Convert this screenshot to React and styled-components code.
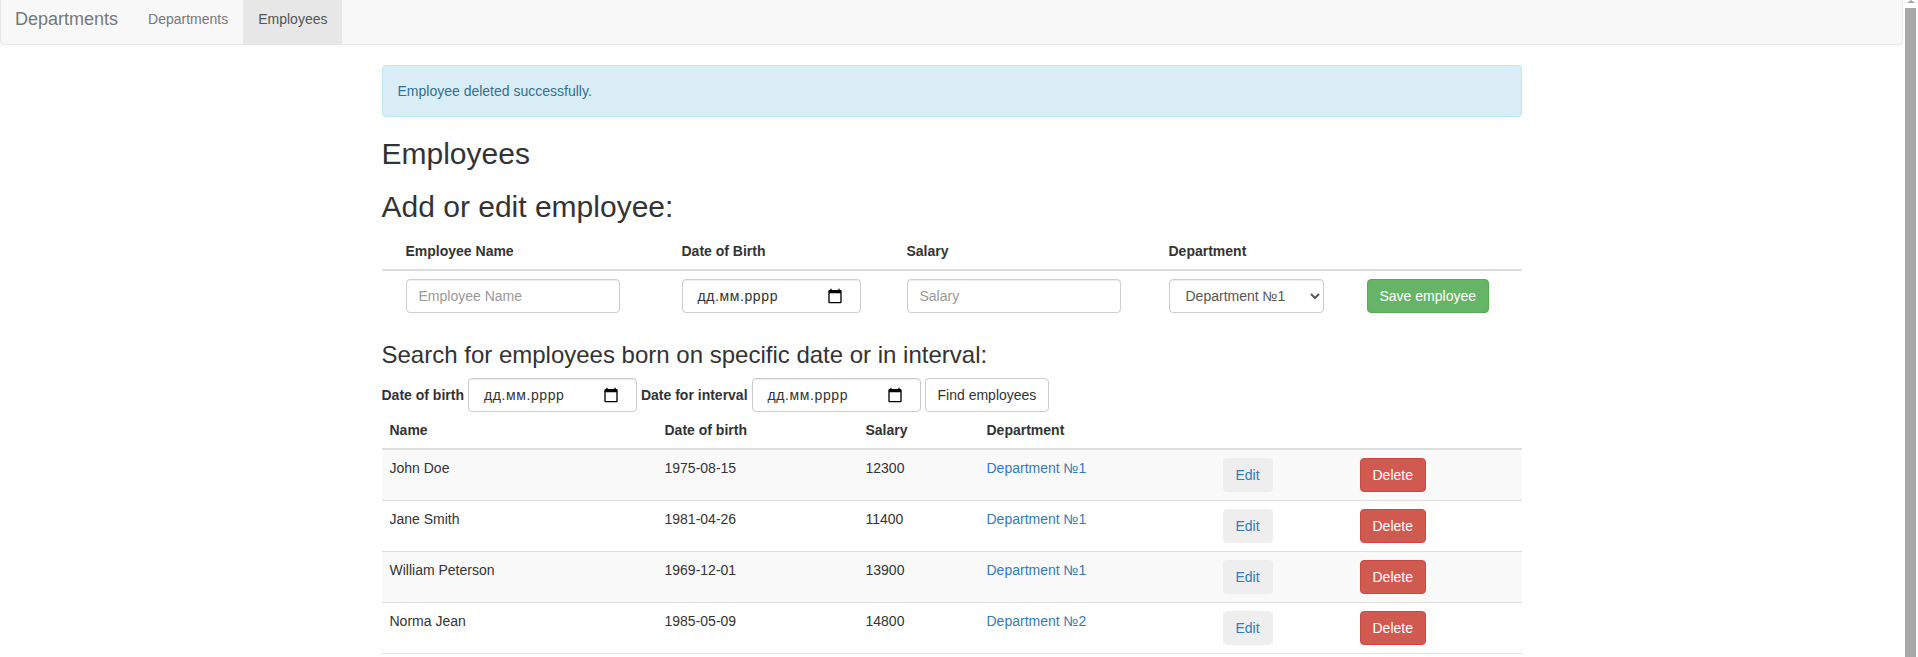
import React from 'react';
import styled, { createGlobalStyle, css } from 'styled-components';

const GlobalStyle = createGlobalStyle`
  * { box-sizing: border-box; }
  body {
    margin: 0 15px 0 0;
    font-family: "Liberation Sans", Arial, Helvetica, sans-serif;
    font-size: 14px;
    line-height: 1.42857143;
    color: #333;
    background: #fff;
  }
`;

/* drawing of the window's vertical scrollbar, which lies over the page edge */
const ScrollTrack = styled.div`
  position: fixed;
  top: 0;
  right: 0;
  width: 15px;
  height: 100vh;
  display: flex;
  flex-direction: column;
  align-items: center;
  background: #fff;
`;

const ScrollArrow = styled.div`
  width: 0;
  height: 0;
  border-left: 4px solid transparent;
  border-right: 4px solid transparent;
  border-bottom: 3px solid #a3a3a3;
  margin-bottom: 5px;
`;

const ScrollThumb = styled.div`
  flex: 1;
  width: 11px;
  background: #a8a8a8;
`;

const Navbar = styled.nav`
  display: flex;
  height: 45px;
  background: #f8f8f8;
  border: 1px solid #e7e7e7;
  border-top: 0;
  border-radius: 0 0 4px 4px;
  margin-bottom: 20px;
`;

const Brand = styled.a`
  padding: 9px 15px 15px 14px;
  font-size: 18px;
  line-height: 20px;
  color: #777;
  text-decoration: none;
`;

const NavList = styled.ul`
  display: flex;
  margin: 0;
  padding: 0;
  list-style: none;
`;

const NavLink = styled.a`
  display: block;
  padding: 9px 15px 15px;
  line-height: 20px;
  color: ${(p) => (p.$active ? '#555' : '#777')};
  background: ${(p) => (p.$active ? '#e7e7e7' : 'transparent')};
  text-decoration: none;
`;

const Container = styled.main`
  width: 1170px;
  margin: 0 auto;
  padding: 0 15px;
`;

const Alert = styled.div`
  padding: 15px;
  margin-bottom: 20px;
  border: 1px solid #bce8f1;
  border-radius: 4px;
  background: #d9edf7;
  color: #31708f;
`;

const H2 = styled.h2`
  margin: 20px 0 10px;
  font-size: 30px;
  font-weight: 500;
  line-height: 1.1;
`;

const H3 = styled.h3`
  margin: 20px 0 10px;
  font-size: 24px;
  font-weight: 500;
  line-height: 1.1;
`;

const FormTable = styled.div`
  margin-bottom: 21px;
`;

const FormRow = styled.div`
  display: grid;
  grid-template-columns: 276px 225px 262px 198px 1fr;
  padding-left: 16px;
  ${(p) =>
    p.$head &&
    css`
      border-bottom: 2px solid #ddd;
      font-weight: bold;
    `}
`;

const FormCell = styled.div`
  padding: 8px;
  line-height: 20px;
`;

const controlBase = css`
  height: 34px;
  padding: 6px 12px;
  font-family: inherit;
  font-size: 14px;
  line-height: 1.42857143;
  color: #555;
  background: #fff;
  border: 1px solid #ccc;
  border-radius: 4px;
  box-shadow: inset 0 1px 1px rgba(0, 0, 0, 0.075);
`;

const TextInput = styled.input`
  ${controlBase}
  display: block;
  width: ${(p) => p.$w}px;
  &::placeholder { color: #999; }
`;

const DateBox = styled.label`
  ${controlBase}
  display: inline-flex;
  align-items: center;
  justify-content: space-between;
  width: ${(p) => p.$w}px;
  padding: 6px 17px 6px 15px;
  color: #333;
  flex: none;
`;

const DateText = styled.span`
  letter-spacing: 0.6px;
`;

const Select = styled.select`
  ${controlBase}
  display: block;
  width: ${(p) => p.$w}px;
  color: #555;
`;

const variants = {
  success: css`background: #66b466; border-color: #58ac58; color: #fff;`,
  default: css`background: #fff; border-color: #ccc; color: #333;`,
  danger: css`background: #d05a50; border-color: #c94a42; color: #fff;`,
  light: css`background: #eee; border-color: #eee; color: #337ab7;`,
};

const Button = styled.button`
  display: inline-block;
  height: 34px;
  padding: 6px 12px;
  font-family: inherit;
  font-size: 14px;
  line-height: 1.42857143;
  border: 1px solid transparent;
  border-radius: 4px;
  white-space: nowrap;
  cursor: pointer;
  ${(p) => variants[p.$variant]}
`;

const SearchForm = styled.form`
  display: flex;
  align-items: center;
  gap: 4px;
`;

const Label = styled.label`
  font-weight: bold;
`;

const Table = styled.table`
  width: 100%;
  table-layout: fixed;
  border-collapse: collapse;
  margin-bottom: 20px;
`;

const Col = styled.col`
  width: ${(p) => p.$w}px;
`;

const Th = styled.th`
  padding: 8px;
  line-height: 20px;
  text-align: left;
  vertical-align: bottom;
  border-bottom: 2px solid #ddd;
`;

const Tr = styled.tr`
  &:nth-child(odd) { background: #f9f9f9; }
`;

const Td = styled.td`
  padding: 8px;
  line-height: 20px;
  vertical-align: top;
  border-top: 1px solid #ddd;
  border-bottom: 1px solid #ddd;
`;

const Link = styled.a`
  color: #337ab7;
  text-decoration: none;
`;

const CalendarIcon = () => (
  <svg width="16" height="16" viewBox="0 0 24 24" aria-hidden="true">
    <path
      fill="#000"
      d="M20 3h-1V1h-2v2H7V1H5v2H4c-1.1 0-2 .9-2 2v16c0 1.1.9 2 2 2h16c1.1 0 2-.9 2-2V5c0-1.1-.9-2-2-2zm0 18H4V8h16v13z"
    />
  </svg>
);

const DateField = ({ w }) => (
  <DateBox $w={w}>
    <DateText>дд.мм.рррр</DateText>
    <CalendarIcon />
  </DateBox>
);

const employees = [
  { name: 'John Doe', dob: '1975-08-15', salary: 12300, dept: 'Department №1' },
  { name: 'Jane Smith', dob: '1981-04-26', salary: 11400, dept: 'Department №1' },
  { name: 'William Peterson', dob: '1969-12-01', salary: 13900, dept: 'Department №1' },
  { name: 'Norma Jean', dob: '1985-05-09', salary: 14800, dept: 'Department №2' },
];

export default function App() {
  return (
    <>
      <GlobalStyle />
      <Navbar>
        <Brand href="#">Departments</Brand>
        <NavList>
          <li><NavLink href="#">Departments</NavLink></li>
          <li><NavLink href="#" $active>Employees</NavLink></li>
        </NavList>
      </Navbar>
      <Container>
        <Alert>Employee deleted successfully.</Alert>
        <H2>Employees</H2>
        <H2>Add or edit employee:</H2>
        <FormTable>
          <FormRow $head>
            <FormCell>Employee Name</FormCell>
            <FormCell>Date of Birth</FormCell>
            <FormCell>Salary</FormCell>
            <FormCell>Department</FormCell>
            <FormCell />
          </FormRow>
          <FormRow>
            <FormCell><TextInput $w={214} placeholder="Employee Name" /></FormCell>
            <FormCell><DateField w={179} /></FormCell>
            <FormCell><TextInput $w={214} placeholder="Salary" /></FormCell>
            <FormCell>
              <Select $w={155} defaultValue="1">
                <option value="1">Department №1</option>
                <option value="2">Department №2</option>
              </Select>
            </FormCell>
            <FormCell><Button $variant="success">Save employee</Button></FormCell>
          </FormRow>
        </FormTable>
        <H3>Search for employees born on specific date or in interval:</H3>
        <SearchForm onSubmit={(e) => e.preventDefault()}>
          <Label>Date of birth</Label>
          <DateField w={169} />
          <Label>Date for interval</Label>
          <DateField w={169} />
          <Button $variant="default" type="submit">Find employees</Button>
        </SearchForm>
        <Table>
          <colgroup>
            <Col $w={275} />
            <Col $w={201} />
            <Col $w={121} />
            <Col $w={236} />
            <Col $w={137} />
            <Col $w={170} />
          </colgroup>
          <thead>
            <tr>
              <Th>Name</Th>
              <Th>Date of birth</Th>
              <Th>Salary</Th>
              <Th>Department</Th>
              <Th />
              <Th />
            </tr>
          </thead>
          <tbody>
            {employees.map((e) => (
              <Tr key={e.name}>
                <Td>{e.name}</Td>
                <Td>{e.dob}</Td>
                <Td>{e.salary}</Td>
                <Td><Link href="#">{e.dept}</Link></Td>
                <Td><Button $variant="light">Edit</Button></Td>
                <Td><Button $variant="danger">Delete</Button></Td>
              </Tr>
            ))}
          </tbody>
        </Table>
      </Container>
      <ScrollTrack aria-hidden="true">
        <ScrollArrow />
        <ScrollThumb />
      </ScrollTrack>
    </>
  );
}
